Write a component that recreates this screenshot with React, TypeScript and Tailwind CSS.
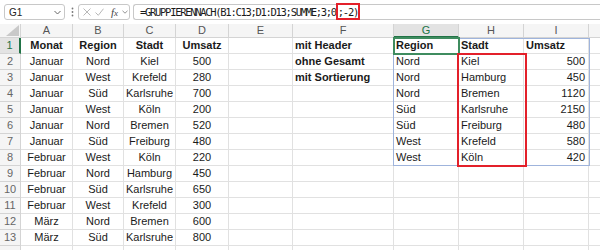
import React from "react";

const rows: string[][] = [
  ["Monat", "Region", "Stadt", "Umsatz", "", "mit Header", "Region", "Stadt", "Umsatz"],
  ["Januar", "Nord", "Kiel", "500", "", "ohne Gesamt", "Nord", "Kiel", "500"],
  ["Januar", "West", "Krefeld", "280", "", "mit Sortierung", "Nord", "Hamburg", "450"],
  ["Januar", "Süd", "Karlsruhe", "700", "", "", "Nord", "Bremen", "1120"],
  ["Januar", "West", "Köln", "200", "", "", "Süd", "Karlsruhe", "2150"],
  ["Januar", "Nord", "Bremen", "520", "", "", "Süd", "Freiburg", "480"],
  ["Januar", "Süd", "Freiburg", "480", "", "", "West", "Krefeld", "580"],
  ["Februar", "West", "Köln", "220", "", "", "West", "Köln", "420"],
  ["Februar", "Nord", "Hamburg", "450", "", "", "", "", ""],
  ["Februar", "Süd", "Karlsruhe", "650", "", "", "", "", ""],
  ["Februar", "West", "Krefeld", "300", "", "", "", "", ""],
  ["März", "Nord", "Bremen", "600", "", "", "", "", ""],
  ["März", "Süd", "Karlsruhe", "800", "", "", "", "", ""],
  ["", "", "", "", "", "", "", "", ""],
];

const cols = ["A", "B", "C", "D", "E", "F", "G", "H", "I", ""];

function cellClass(ri: number, ci: number): string {
  const bold = (ri === 0 && (ci <= 3 || ci >= 6)) || (ci === 5 && ri <= 2);
  let align = "justify-center";
  if (ci === 5 || ci === 6 || ci === 7) align = "justify-start pl-[2px]";
  if (ci === 8) align = ri === 0 ? "justify-start pl-[2px]" : "justify-end pr-[3px]";
  return (
    "flex items-center h-[16px] border-r border-b border-[#e1e1e1] text-[11px] text-[#1a1a1a] whitespace-nowrap overflow-hidden " +
    align +
    (bold ? " font-bold" : "")
  );
}

export default function App() {
  return (
    <div className="relative w-[600px] h-[250px] overflow-hidden bg-white font-['Liberation_Sans',Arial,sans-serif]">
      {/* formula bar */}
      <div className="flex items-center h-[24px] bg-white">
        <div className="ml-[4px] w-[61px] h-[16px] border border-[#c8c8c8] rounded-[3px] flex items-center justify-between pl-[4px] pr-[3px] text-[10px] text-[#222]">
          <span>G1</span>
          <svg width="7" height="5" viewBox="0 0 7 5">
            <path d="M0.5 1 L3.5 4 L6.5 1" fill="none" stroke="#666" strokeWidth="1" />
          </svg>
        </div>
        <svg className="ml-[6px]" width="3" height="10" viewBox="0 0 3 10">
          <circle cx="1.5" cy="1.5" r="0.9" fill="#777" />
          <circle cx="1.5" cy="5" r="0.9" fill="#777" />
          <circle cx="1.5" cy="8.5" r="0.9" fill="#777" />
        </svg>
        <div className="ml-[4px] w-[52px] h-[16px] border border-[#c8c8c8] rounded-[3px] flex items-center pl-[4px] gap-[4px]">
          <svg width="8" height="8" viewBox="0 0 8 8">
            <path d="M0.5 0.5 L7.5 7.5 M7.5 0.5 L0.5 7.5" stroke="#b0b0b0" strokeWidth="0.9" />
          </svg>
          <svg width="9" height="8" viewBox="0 0 9 8">
            <path d="M0.5 4.5 L3.3 7.3 L8.5 0.7" fill="none" stroke="#b0b0b0" strokeWidth="0.9" />
          </svg>
          <span className="ml-[3px] text-[11px] italic font-['Liberation_Serif',serif] text-[#444] leading-none">
            f<span className="text-[9px]">x</span>
          </span>
          <svg width="6" height="4" viewBox="0 0 6 4">
            <path d="M0.5 0.8 L3 3.2 L5.5 0.8" fill="none" stroke="#888" strokeWidth="0.9" />
          </svg>
        </div>
        <div className="relative ml-[3px] flex-1 h-[16px] border border-[#c8c8c8] border-r-0 rounded-l-[3px] flex items-center pl-[6px] text-[10.5px] leading-[12px] tracking-[-1.3px] font-['DejaVu_Sans_Mono',monospace] text-[#1a1a1a]">
          <span>=GRUPPIERENNACH(B1:C13;D1:D13;SUMME;3;0</span>
          <span className="relative pl-[2px] pr-[2px]">
            ;-2)
            <span className="absolute left-[0px] right-[0px] top-[-3px] bottom-[-2px] border-2 border-[#e3202a] pointer-events-none" />
          </span>
        </div>
      </div>

      {/* grid */}
      <div className="relative">
        <div className="grid grid-cols-[21px_52px_51px_52px_53px_64px_101px_65px_65px_65px_40px] grid-rows-[14px_repeat(14,16px)]">
          <div className="h-[14px] bg-[#f5f5f5] border-r border-b border-[#d4d4d4] flex items-end justify-end pr-[1px] pb-[1px]">
            <svg width="13" height="11" viewBox="0 0 13 11">
              <path d="M13 0 L13 11 L0 11 Z" fill="#c9c9c9" />
            </svg>
          </div>
          {cols.map((c, i) =>
            c === "G" ? (
              <div
                key={"h" + i}
                className="h-[14px] bg-[#e3e3e3] border-r border-[#d4d4d4] border-b-2 border-b-[#217346] flex items-center justify-center text-[11px] text-[#217346]"
              >
                {c}
              </div>
            ) : (
              <div
                key={"h" + i}
                className="h-[14px] bg-[#f5f5f5] border-r border-b border-[#d4d4d4] flex items-center justify-center text-[11px] text-[#555]"
              >
                {c}
              </div>
            )
          )}
          {rows.map((r, ri) => (
            <React.Fragment key={"r" + ri}>
              {ri === 0 ? (
                <div className="h-[16px] bg-[#e3e3e3] border-r-2 border-r-[#217346] border-b border-[#d4d4d4] flex items-center justify-center text-[11px] text-[#217346]">
                  1
                </div>
              ) : (
                <div className="h-[16px] bg-[#f5f5f5] border-r border-b border-[#d4d4d4] flex items-center justify-center text-[11px] text-[#666]">
                  {ri < 13 ? ri + 1 : ""}
                </div>
              )}
              {r.map((t, ci) => (
                <div key={"c" + ri + "-" + ci} className={cellClass(ri, ci)}>
                  {t}
                </div>
              ))}
              <div className="h-[16px] border-r border-b border-[#e1e1e1]" />
            </React.Fragment>
          ))}
        </div>

        {/* spill range border */}
        <div className="absolute left-[393px] top-[14px] w-[197px] h-[128px] border border-[#9fb4dc] pointer-events-none" />
        {/* active cell G1 */}
        <div className="absolute left-[393px] top-[13px] w-[67px] h-[18px] border-2 border-[#3f8c5f] pointer-events-none" />
        {/* red highlight H2:H8 */}
        <div className="absolute left-[457px] top-[29px] w-[70px] h-[114px] border-2 border-[#e3202a] pointer-events-none" />
      </div>
    </div>
  );
}
